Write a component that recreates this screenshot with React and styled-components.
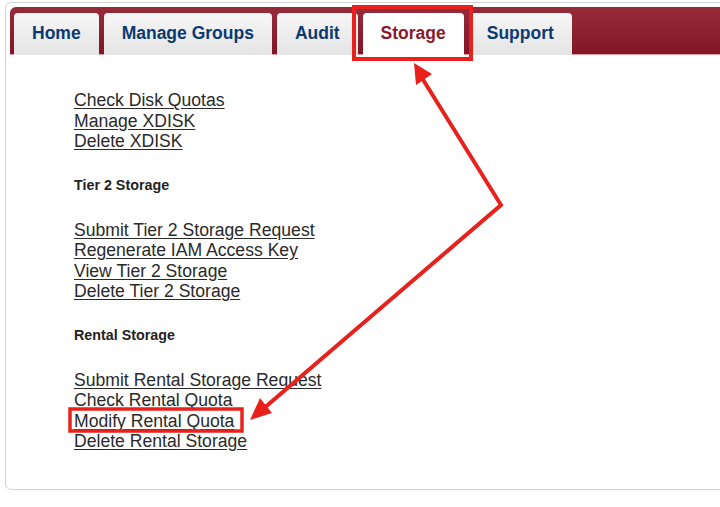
import React from 'react';
import styled, {createGlobalStyle} from 'styled-components';

const tabs = ['Home', 'Manage Groups', 'Audit', 'Storage', 'Support'];

const sections = [
    {
        links: [
            {label: 'Check Disk Quotas'},
            {label: 'Manage XDISK'},
            {label: 'Delete XDISK'},
        ],
    },
    {
        title: 'Tier 2 Storage',
        links: [
            {label: 'Submit Tier 2 Storage Request'},
            {label: 'Regenerate IAM Access Key'},
            {label: 'View Tier 2 Storage'},
            {label: 'Delete Tier 2 Storage'},
        ],
    },
    {
        title: 'Rental Storage',
        links: [
            {label: 'Submit Rental Storage Request'},
            {label: 'Check Rental Quota', plain: true},
            {label: 'Modify Rental Quota'},
            {label: 'Delete Rental Storage'},
        ],
    },
];

const App = () => {
    return (
        <Page>
            <GlobalStyle />
            <Panel>
                <TabBar>
                    {tabs.map(t => (
                        <Tab key={t} $active={t === 'Storage'}>{t}</Tab>
                    ))}
                </TabBar>
                <Content>
                    {sections.map((s, i) => (
                        <Section key={i}>
                            {s.title && <SectionTitle>{s.title}</SectionTitle>}
                            {s.links.map(l => (
                                <LinkItem key={l.label} $plain={l.plain}>{l.label}</LinkItem>
                            ))}
                        </Section>
                    ))}
                </Content>
            </Panel>
            <Annotations width="720" height="507" viewBox="0 0 720 507">
                <rect x="354" y="7" width="117" height="52" fill="none" stroke="#e8211c" strokeWidth="4" />
                <rect x="70" y="409" width="172" height="22" fill="none" stroke="#e8211c" strokeWidth="3.5" />
                <polyline points="422,78 501,205 263,409" fill="none" stroke="#e8211c" strokeWidth="4" strokeLinejoin="miter" />
                <polygon points="414,63 432,74 416,85" fill="#e8211c" />
                <polygon points="250,420 272,413 260,398" fill="#e8211c" />
            </Annotations>
        </Page>
    );
}

const GlobalStyle = createGlobalStyle`
body{
    margin: 0;
    overflow: hidden;
    background: #ffffff;
    font-family: "Liberation Sans", Arial, sans-serif;
}
`;

const Page = styled.div`
position: relative;
width: 720px;
height: 507px;
overflow: hidden;
`;

const Panel = styled.div`
margin: 2px 0 0 5px;
width: 740px;
height: 488px;
border: 1px solid #d3d3d3;
border-radius: 6px;
padding: 4px;
box-sizing: border-box;
`;

const TabBar = styled.div`
display: flex;
align-items: flex-end;
gap: 5px;
height: 48px;
padding: 0 0 0 4px;
background: linear-gradient(#962b39, #831626);
border-radius: 6px 0 0 0;
border-bottom: 1px solid #eb9c9f;
box-sizing: border-box;
`;

const Tab = styled.div`
display: flex;
align-items: center;
height: 42px;
margin-bottom: -1px;
padding: 0 18px 2px;
box-sizing: border-box;
border-radius: 4px 4px 0 0;
background: ${p => p.$active ? '#ffffff' : 'linear-gradient(#f6f6f6, #e4e4e4)'};
color: ${p => p.$active ? '#8a1a2b' : '#0b3a72'};
font-size: 17.5px;
font-weight: bold;
`;

const Content = styled.div`
padding: 35px 0 0 64px;
`;

const Section = styled.div`
display: flex;
flex-direction: column;
align-items: flex-start;
`;

const SectionTitle = styled.h5`
margin: 25px 0 26px;
font-size: 14.3px;
line-height: 17px;
color: #222222;
`;

const LinkItem = styled.a`
font-size: 17.6px;
line-height: 20.5px;
color: #2a2a2a;
text-decoration: ${p => p.$plain ? 'none' : 'underline'};
text-underline-offset: 2px;
`;

const Annotations = styled.svg`
position: absolute;
top: 0;
left: 0;
pointer-events: none;
`;

export default App;
